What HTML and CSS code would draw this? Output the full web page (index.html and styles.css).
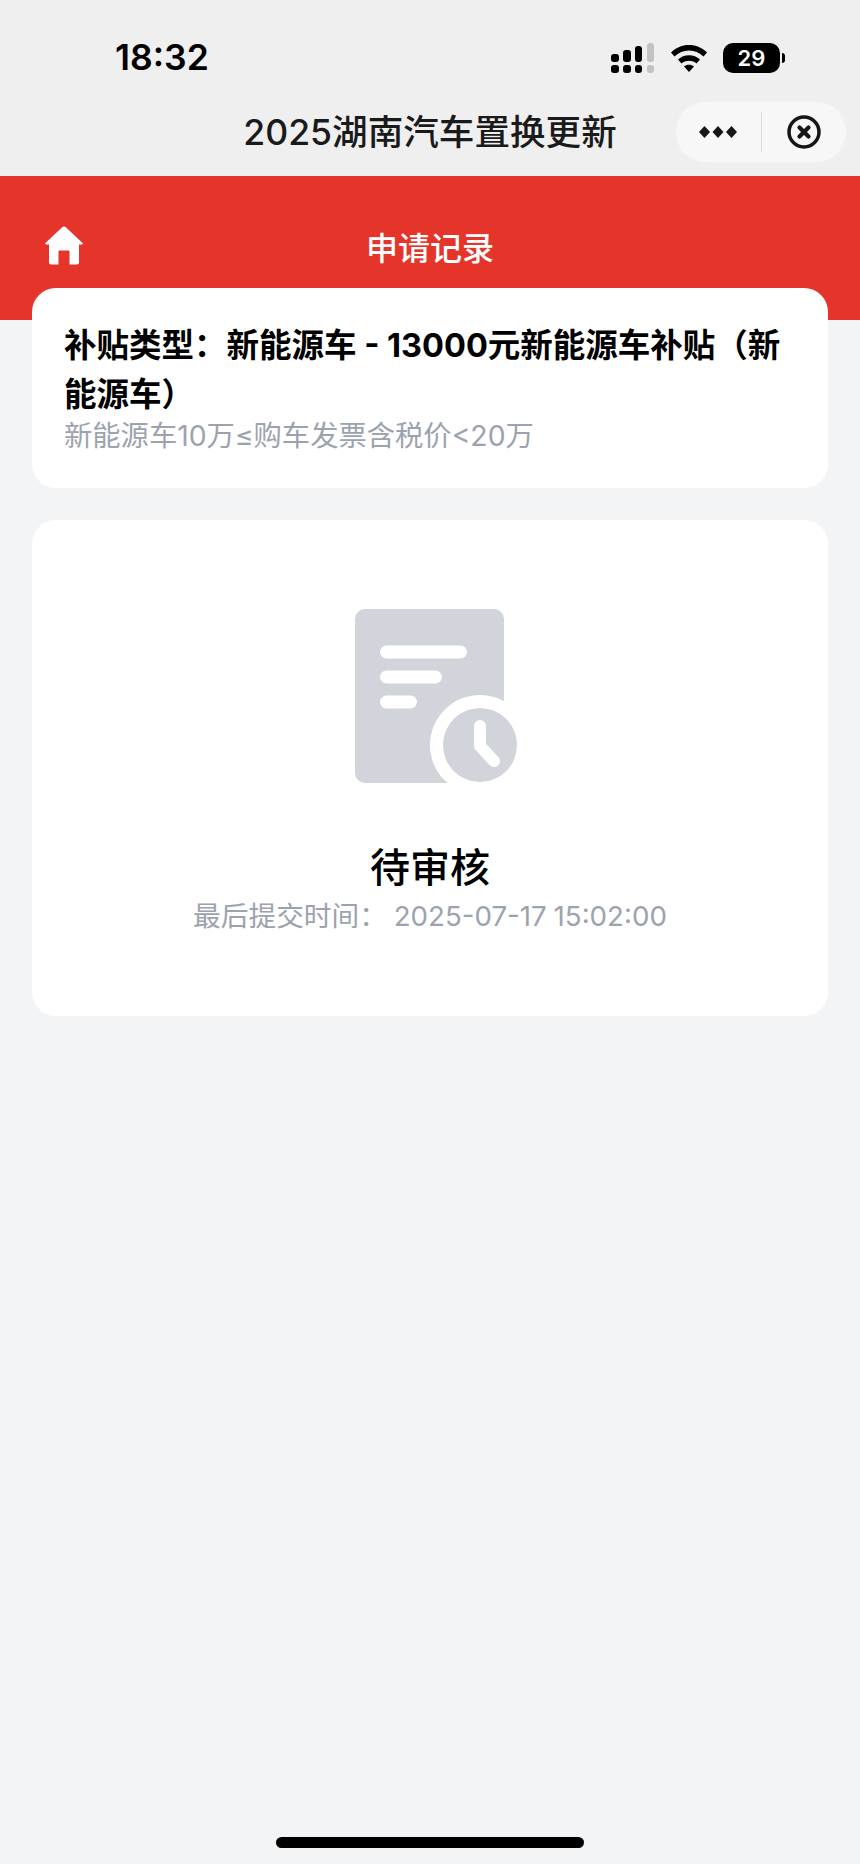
FILE: index.html
```html
<!DOCTYPE html>
<html lang="zh-CN">
<head>
  <meta charset="UTF-8">
  <meta name="viewport" content="width=device-width, initial-scale=1.0">
  <title>申请记录</title>
  <link rel="stylesheet" href="styles.css">
</head>
<body>

  <div class="top-bar">
    <div class="status-bar">
      <span class="time">18:32</span>
      <div class="status-icons">
        <!-- signal: four dotted columns, the last one dimmed -->
        <svg class="signal" width="44" height="30" viewBox="0 0 44 30">
          <rect x="0" y="11" width="8" height="8" rx="3"/>
          <rect x="0" y="22" width="8" height="8" rx="3"/>
          <rect x="12" y="7" width="8" height="12" rx="3"/>
          <rect x="12" y="22" width="8" height="8" rx="3"/>
          <rect x="24" y="3" width="7" height="16" rx="3"/>
          <rect x="24" y="22" width="7" height="8" rx="3"/>
          <rect class="dim" x="36" y="0" width="7" height="19" rx="3"/>
          <rect class="dim" x="36" y="22" width="7" height="8" rx="3"/>
        </svg>
        <svg class="wifi" width="38" height="28" viewBox="0 0 38 28">
          <path d="M1 8.500C6 3.500 12 1 19 1s13 2.500 18 7.500l-3.500 4C29.500 8.500 24.500 6.500 19 6.500S8.500 8.500 4.500 12.500z"/>
          <path d="M8 15.500C11 12.800 14.800 11.300 19 11.300s8 1.500 11 4.200l-3.500 4C24.500 17.700 22 16.700 19 16.700s-5.500 1-7.500 2.800z"/>
          <path d="M14 22.500c1.400-1.200 3.100-1.800 5-1.800s3.600.6 5 1.800L19 28z"/>
        </svg>
        <div class="battery">
          <span class="battery-level">29</span>
          <span class="battery-cap"></span>
        </div>
      </div>
    </div>
    <div class="nav-bar">
      <div class="nav-title">2025湖南汽车置换更新</div>
      <div class="capsule">
        <div class="capsule-btn">
          <svg width="38" height="12" viewBox="0 0 38 12">
            <path d="M5.500 0l5.500 6-5.500 6L0 6zM19 0l5.500 6-5.500 6-5.500-6zM32.500 0L38 6l-5.500 6L27 6z"/>
          </svg>
        </div>
        <span class="capsule-line"></span>
        <div class="capsule-btn">
          <svg width="34" height="34" viewBox="0 0 34 34">
            <circle cx="17" cy="17" r="15" fill="none" stroke="#161616" stroke-width="3.500"/>
            <path d="M12.500 12.500l9 9M21.500 12.500l-9 9" fill="none" stroke="#161616" stroke-width="4.200" stroke-linecap="round"/>
          </svg>
        </div>
      </div>
    </div>
  </div>

  <div class="page-header">
    <svg class="home-icon" width="40" height="40" viewBox="0 0 40 40">
      <path d="M20 1.500c.7 0 1.300.3 1.800.7L38.600 18c.5.600.1 1.500-.7 1.500H35v18c0 1.100-.9 2-2 2h-7.500V26.500c0-.6-.4-1-1-1h-9c-.6 0-1 .4-1 1v13H7c-1.100 0-2-.9-2-2v-18H2.100c-.8 0-1.200-.9-.7-1.500L18.200 2.200c.5-.4 1.100-.7 1.800-.7z"/>
    </svg>
    <h1 class="page-title">申请记录</h1>
  </div>

  <div class="content">
    <section class="card info-card">
      <div class="info-title">补贴类型：新能源车 - 13000元新能源车补贴（新能源车）</div>
      <div class="info-desc">新能源车10万≤购车发票含税价&lt;20万</div>
    </section>

    <section class="card status-card">
      <svg class="status-icon" width="164" height="176" viewBox="0 0 164 176">
        <rect x="0" y="0" width="149" height="174" rx="10" fill="#d1d5db"/>
        <circle cx="125" cy="136" r="50" fill="#fff"/>
        <circle cx="125" cy="136" r="37" fill="#d1d5db"/>
        <path d="M125 117v20l14 15" fill="none" stroke="#fff" stroke-width="12" stroke-linecap="round" stroke-linejoin="round"/>
        <path d="M31.500 43h74M31.500 68h49M31.500 93h24" fill="none" stroke="#fff" stroke-width="13" stroke-linecap="round"/>
      </svg>
      <div class="status-text">待审核</div>
      <div class="status-time">最后提交时间： 2025-07-17 15:02:00</div>
    </section>
  </div>

  <div class="home-bar"></div>

</body>
</html>
```

FILE: styles.css
```css
/* Basic styling */
* {
  box-sizing: border-box;
}

html, body {
  margin: 0;
  height: 100%;
}

body {
  display: flex;
  flex-direction: column;
  height: 1864px;
  overflow: hidden;
  font-family: Inter, "Noto Sans CJK SC", sans-serif;
  background-color: #f3f4f6;
}

/* System bar and mini program nav */
.top-bar {
  height: 176px;
  background: #efefef;
}

.status-bar {
  display: flex;
  justify-content: space-between;
  align-items: center;
  height: 84px;
  padding: 31px 75px 0 115px;
}

.time {
  font-size: 35.500px;
  font-weight: 600;
  color: #000;
  line-height: 1;
}

.status-icons {
  display: flex;
  align-items: center;
  gap: 15px;
}

.signal {
  fill: #000;
}

.signal .dim {
  fill: #c2c2c2;
}

.wifi {
  fill: #000;
}

.battery {
  display: flex;
  align-items: center;
  gap: 2px;
}

.battery-level {
  width: 57px;
  height: 30px;
  border-radius: 10px;
  background: #000;
  color: #fff;
  font-size: 22px;
  font-weight: 600;
  line-height: 30px;
  text-align: center;
}

.battery-cap {
  width: 3px;
  height: 10px;
  border-radius: 0 3px 3px 0;
  background: #000;
}

.nav-bar {
  position: relative;
  display: flex;
  align-items: center;
  justify-content: flex-end;
  height: 92px;
  padding: 4px 13px 0 0;
}

.nav-title {
  position: absolute;
  left: 0;
  right: 0;
  top: 24px;
  font-size: 35.600px;
  font-weight: 500;
  line-height: 50px;
  color: #1a1a1a;
  text-align: center;
}

.capsule {
  display: flex;
  align-items: center;
  width: 172px;
  height: 62px;
  border-radius: 31px;
  background: #f7f7f7;
  border: 1px solid #f1f1f1;
}

.capsule-btn {
  flex: 1;
  display: flex;
  justify-content: center;
  align-items: center;
}

.capsule-btn svg {
  fill: #161616;
}

.capsule-line {
  width: 1px;
  height: 40px;
  background: #dcdcdc;
}

/* Red page header */
.page-header {
  position: relative;
  display: flex;
  justify-content: center;
  height: 144px;
  padding-top: 51px;
  background: #e5352a;
}

.home-icon {
  position: absolute;
  left: 44px;
  top: 49px;
  fill: #fff;
}

.page-title {
  margin: 0;
  font-size: 32px;
  font-weight: 500;
  line-height: 44px;
  color: #fff;
}

/* Cards */
.content {
  display: flex;
  flex: 1;
  flex-direction: column;
  gap: 32px;
  margin-top: -32px;
  padding: 0 32px;
  position: relative;
}

.card {
  background: #fff;
  border-radius: 24px;
}

.info-card {
  height: 200px;
  padding: 33px 32px 0;
}

.info-title {
  font-size: 32.500px;
  font-weight: 700;
  line-height: 49px;
  color: #000;
}

.info-desc {
  font-size: 28.300px;
  line-height: 34px;
  color: #9ca3af;
}

.status-card {
  display: flex;
  flex-direction: column;
  align-items: center;
  height: 496px;
  padding-top: 89px;
}

.status-icon {
  margin-left: 14px;
}

.status-text {
  margin-top: 55px;
  font-size: 40px;
  font-weight: 500;
  line-height: 56px;
  color: #000;
}

.status-time {
  font-size: 27.700px;
  line-height: 40px;
  word-spacing: -1px;
  color: #9ca3af;
}

/* iOS home indicator */
.home-bar {
  flex: none;
  align-self: center;
  width: 308px;
  height: 11px;
  margin-bottom: 16px;
  border-radius: 6px;
  background: #000;
}
```
